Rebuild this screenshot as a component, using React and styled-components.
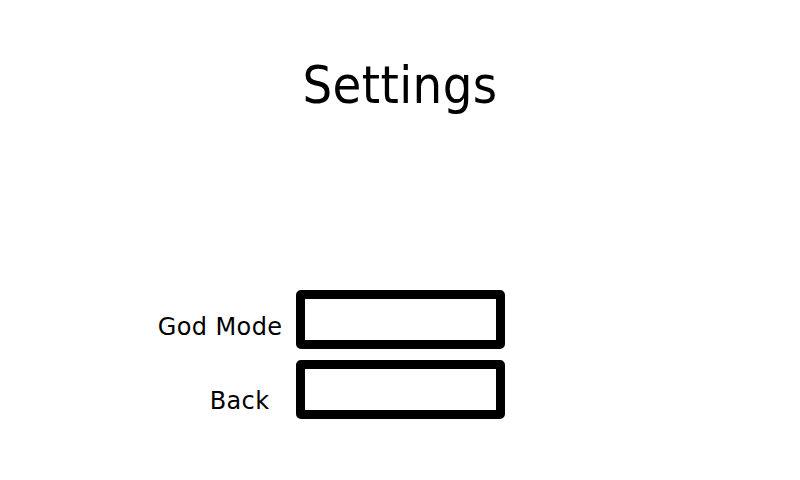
import React from 'react';
import styled, { createGlobalStyle } from 'styled-components';

const GlobalStyle = createGlobalStyle`
    html, body {
        margin: 0;
        padding: 0;
        background: #fff;
    }
    body {
        font-family: "DejaVu Sans", sans-serif;
        color: #000;
    }
`;

export default function App() {
    const rows = [
        { label: 'God Mode', gap: 13, drop: 25 },
        { label: 'Back', gap: 26, drop: 29 },
    ];

    return (
        <>
            <GlobalStyle />
            <Screen>
                <Title>Settings</Title>
                <Menu>
                    {rows.map((row) => (
                        <Row key={row.label}>
                            <Label gap={row.gap} drop={row.drop}>{row.label}</Label>
                            <Box />
                        </Row>
                    ))}
                </Menu>
            </Screen>
        </>
    );
}

const Screen = styled.div`
    width: 800px;
    height: 480px;
    display: flex;
    flex-direction: column;
    align-items: center;
    padding-top: 59px;
    box-sizing: border-box;
`;

const Title = styled.h1`
    margin: 0;
    font-family: "DejaVu Sans Condensed", "DejaVu Sans", sans-serif;
    font-size: 52px;
    font-weight: normal;
    line-height: 52px;
    letter-spacing: 0.4px;
`;

const Menu = styled.div`
    width: 100%;
    display: flex;
    flex-direction: column;
    gap: 11px;
    margin-top: 179px;
`;

const Row = styled.div`
    display: grid;
    grid-template-columns: 1fr 209px 1fr;
    align-items: start;
`;

const Label = styled.span`
    justify-self: end;
    margin-right: ${(p) => p.gap}px;
    margin-top: ${(p) => p.drop}px;
    font-size: 24px;
    line-height: 24px;
    letter-spacing: 0.4px;
`;

const Box = styled.div`
    grid-column: 2;
    height: 59px;
    box-sizing: border-box;
    border: 9px solid #000;
    border-radius: 5px;
`;
